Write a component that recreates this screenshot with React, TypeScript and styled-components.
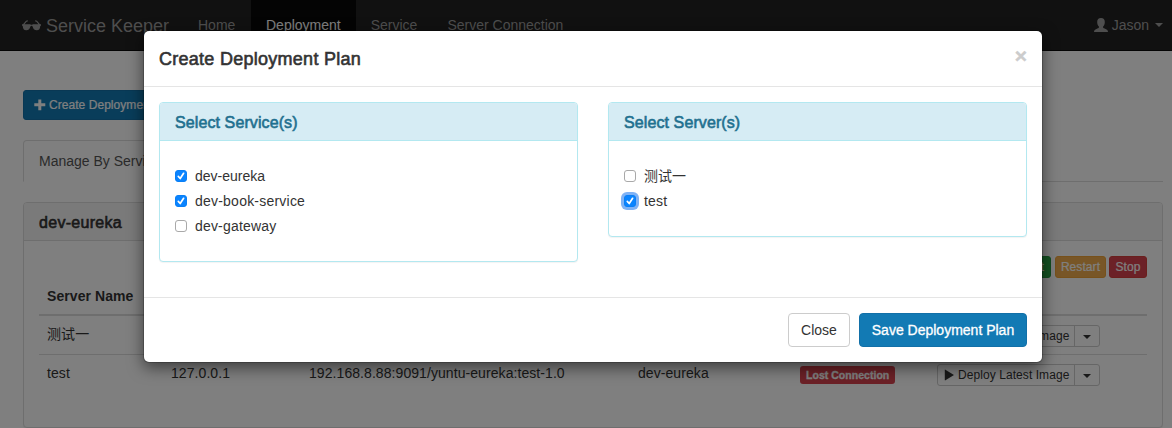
import React from 'react';
import styled, { createGlobalStyle, css } from 'styled-components';

const GlobalStyle = createGlobalStyle`
  *, *::before, *::after { box-sizing: border-box; }
  html, body { margin: 0; padding: 0; background: #fff; overflow: hidden; }
  body {
    font-family: "Liberation Sans", "Noto Sans CJK SC", sans-serif;
    font-size: 14px;
    line-height: 20px;
    color: #333;
  }
  h3, h4, ul { margin: 0; padding: 0; }
  button { font-family: inherit; margin: 0; }
`;

const medium = css`
  font-weight: 400;
  -webkit-text-stroke: 0.6px currentColor;
`;

const Page = styled.div`
  position: relative;
  height: 428px;
  overflow: hidden;
`;

const Navbar = styled.nav`
  display: flex;
  height: 51px;
  padding: 0 9px 0 22px;
  background: #222;
  border-bottom: 1px solid #080808;
  color: #9d9d9d;
`;

const Brand = styled.div`
  display: flex;
  align-items: center;
  gap: 5px;
  width: 161px;
  height: 50px;
  padding-top: 1px;
  font-size: 18px;
  white-space: nowrap;
`;

const NavList = styled.ul`
  display: flex;
  flex: 1;
  list-style: none;
`;

const NavItem = styled.li<{ $active?: boolean }>`
  padding: 15px;
  height: 50px;
  color: ${(p) => (p.$active ? '#fff' : '#9d9d9d')};
  background: ${(p) => (p.$active ? '#080808' : 'transparent')};
  &:first-child { width: 68px; }
`;

const UserMenu = styled.div`
  display: flex;
  align-items: center;
  height: 50px;
  gap: 4px;
`;

const Caret = styled.span<{ $gap?: number }>`
  width: 8px;
  height: 4px;
  margin-left: ${(p) => p.$gap ?? 0}px;
  border-top: 4px solid currentColor;
  border-left: 4px solid transparent;
  border-right: 4px solid transparent;
`;

const Content = styled.main`
  padding: 39px 9px 0 23px;
`;

const CreateButton = styled.button`
  display: flex;
  align-items: center;
  gap: 3px;
  height: 30px;
  padding: 0 10px;
  border: 1px solid #1270a8;
  border-radius: 3px;
  background: #127ab4;
  color: #fff;
  font-size: 12px;
  letter-spacing: 0.05px;
  -webkit-text-stroke: 0.2px currentColor;
`;

const Tabs = styled.div`
  display: flex;
  height: 42px;
  margin-top: 20px;
  border-bottom: 1px solid #ddd;
`;

const Tab = styled.div`
  height: 42px;
  padding: 10px 15px;
  border: 1px solid #ddd;
  border-bottom-color: #fff;
  border-radius: 4px 4px 0 0;
  background: #fff;
  color: #555;
`;

const Panel = styled.section<{ $info?: boolean }>`
  border: 1px solid ${(p) => (p.$info ? '#b3e8f0' : '#ddd')};
  border-radius: 4px;
  box-shadow: 0 1px 1px rgba(0, 0, 0, 0.05);
  background: #fff;
`;

const PanelHeading = styled.h3<{ $info?: boolean; $spacing?: number }>`
  ${medium}
  height: 38px;
  padding: 11px 15px 9px;
  border-bottom: 1px solid ${(p) => (p.$info ? '#b3e8f0' : '#ddd')};
  border-radius: 3px 3px 0 0;
  background: ${(p) => (p.$info ? '#d6ecf4' : '#f5f5f5')};
  color: ${(p) => (p.$info ? '#1f708f' : '#333')};
  font-size: 16px;
  line-height: 18px;
  letter-spacing: ${(p) => p.$spacing ?? 0.1}px;
`;

const ServicePanel = styled(Panel)`
  margin-top: 20px;
  height: 226px;
`;

const ServiceBody = styled.div`
  padding: 15px;
`;

const Actions = styled.div`
  display: flex;
  justify-content: flex-end;
  gap: 3px;
  height: 22px;
`;

const ActionButton = styled.button<{ $bg: string; $edge: string; $width: number }>`
  width: ${(p) => p.$width}px;
  height: 22px;
  padding: 0;
  border: 1px solid ${(p) => p.$edge};
  border-radius: 3px;
  background: ${(p) => p.$bg};
  color: #fff;
  font-size: 12px;
  line-height: 18px;
  letter-spacing: 0.08px;
  -webkit-text-stroke: 0.2px currentColor;
  &:first-child { margin-right: 1px; }
`;

const columns = '124px 138px 329px 162px 137px 1fr';

const HeadRow = styled.div`
  display: grid;
  grid-template-columns: ${columns};
  height: 38px;
  border-bottom: 2px solid #ddd;
  font-weight: 700;
`;

const Row = styled.div`
  display: grid;
  grid-template-columns: ${columns};
  height: 39px;
  border-bottom: 1px solid #ddd;
  &:last-child { border-bottom: 0; }
`;

const Cell = styled.div`
  display: flex;
  align-items: flex-start;
  padding: 8px;
  letter-spacing: 0.07px;
  white-space: nowrap;
`;

const Label = styled.span`
  height: 18px;
  margin-top: 3px;
  padding: 0 6px;
  border-radius: 3px;
  background: #d9434f;
  color: #fff;
  font-size: 10.5px;
  font-weight: 700;
  line-height: 18px;
  letter-spacing: 0.03px;
  -webkit-text-stroke: 0.3px currentColor;
`;

const SplitButton = styled.div`
  display: flex;
  height: 22px;
  margin-top: 1px;
  border: 1px solid #ccc;
  border-radius: 3px;
  font-size: 12px;
  line-height: 20px;
`;

const SplitMain = styled.div`
  display: flex;
  align-items: center;
  gap: 4px;
  width: 137px;
  padding-left: 6px;
  border-right: 1px solid #ccc;
`;

const SplitToggle = styled.div`
  display: flex;
  align-items: center;
  justify-content: center;
  width: 24px;
  padding-top: 1px;
`;

const Backdrop = styled.div`
  position: absolute;
  inset: 0;
  padding: 30px 0 0 143px;
  background: rgba(0, 0, 0, 0.5);
`;

const Dialog = styled.div`
  width: 900px;
  border: 1px solid rgba(0, 0, 0, 0.2);
  border-radius: 6px;
  background: #fff;
  background-clip: padding-box;
  box-shadow: 0 5px 15px rgba(0, 0, 0, 0.5);
`;

const DialogHeader = styled.header`
  display: flex;
  justify-content: space-between;
  height: 56px;
  padding: 15px;
  border-bottom: 1px solid #e5e5e5;
`;

const DialogTitle = styled.h4`
  ${medium}
  font-size: 18px;
  line-height: 26px;
  letter-spacing: 0.27px;
`;

const CloseMark = styled.button`
  height: 21px;
  margin-top: -1px;
  padding: 0;
  border: 0;
  background: none;
  color: #ccc;
  font-size: 21px;
  font-weight: 700;
  line-height: 21px;
  -webkit-text-stroke: 0.4px currentColor;
`;

const DialogBody = styled.div`
  display: grid;
  grid-template-columns: 1fr 1fr;
  gap: 30px;
  align-items: start;
  height: 210px;
  padding: 15px;
`;

const Options = styled.div`
  display: flex;
  flex-direction: column;
  gap: 5px;
  padding: 25px 15px;
`;

const Option = styled.label<{ $spacing?: number }>`
  display: flex;
  align-items: center;
  gap: 8px;
  height: 20px;
  letter-spacing: ${(p) => p.$spacing ?? 0}px;
`;

const Box = styled.span<{ $checked?: boolean; $focused?: boolean }>`
  display: flex;
  width: 12px;
  height: 12px;
  border: 1px solid ${(p) => (p.$checked ? '#0a7ff5' : '#a9a9a9')};
  border-radius: 3px;
  background: ${(p) => (p.$checked ? '#0a84ff' : '#fff')};
  box-shadow: ${(p) => (p.$focused ? '0 0 0 3px #7fb2f5' : 'none')};
`;

const DialogFooter = styled.footer`
  display: flex;
  justify-content: flex-end;
  gap: 9px;
  padding: 15px;
  border-top: 1px solid #e5e5e5;
`;

const FooterButton = styled.button<{ $primary?: boolean }>`
  height: 34px;
  width: ${(p) => (p.$primary ? 168 : 62)}px;
  padding: 0;
  border: 1px solid ${(p) => (p.$primary ? '#1270a8' : '#ccc')};
  border-radius: 4px;
  background: ${(p) => (p.$primary ? '#127ab4' : '#fff')};
  color: ${(p) => (p.$primary ? '#fff' : '#333')};
  font-size: 14px;
  -webkit-text-stroke: ${(p) => (p.$primary ? 0.3 : 0)}px currentColor;
`;

const GlassesIcon = () => (
  <svg width="19" height="18" viewBox="0 0 19 18" fill="currentColor">
    <path d="M0 7.200h1L4 3.700l1.700-.5.3 1-1.400.5-2.100 2.500h5.200c.6 0 .9.500 1.800.500s1.200-.5 1.800-.5h5.200l-2.100-2.500-1.400-.5.3-1 1.700.5 3 3.500h1v1.500h-.7c-.2 3.100-1.200 4.500-3.500 4.500-2.600 0-3.600-1.500-4.200-3.700-.2-.5-.6-.7-1.100-.7s-.9.2-1.100.7c-.6 2.200-1.600 3.700-4.200 3.700C1.900 13.200.9 11.800.7 8.700H0z" />
  </svg>
);

const PlusIcon = () => (
  <svg width="12" height="12" viewBox="0 0 12 12" fill="currentColor">
    <path d="M4.300.400h3v3.900h4v3h-4v3.900h-3V7.300h-4v-3h4z" />
  </svg>
);

const UserIcon = () => (
  <svg width="14" height="15" viewBox="0 0 14 15" fill="currentColor">
    <path d="M7 0c2.500 0 3.800 1.500 3.800 3.900 0 2-.7 3.600-1.700 4.500v1.200c.2.600 1.200.9 2.500 1.400 1.300.5 2.300 1 2.400 3H0c.1-2 1.100-2.500 2.400-3 1.300-.5 2.300-.8 2.500-1.400V8.400C3.900 7.500 3.200 5.900 3.200 3.900 3.200 1.500 4.500 0 7 0z" />
  </svg>
);

const PlayIcon = () => (
  <svg width="10" height="12" viewBox="0 0 10 12" fill="currentColor">
    <path d="M.8.900v10.200c0 .3.3.4.6.2L9.600 6.300c.3-.2.3-.4 0-.6L1.400.700C1.100.500.8.600.8.900z" />
  </svg>
);

const CheckIcon = () => (
  <svg width="10" height="10" viewBox="0 0 10 10" fill="none" stroke="#fff" strokeWidth="1.7" strokeLinecap="round" strokeLinejoin="round">
    <path d="M2.300 5.400l1.900 2.100 3.400-5.200" />
  </svg>
);

type Server = { name: string; ip: string; image: string; service: string };

const servers: Server[] = [
  { name: '测试一', ip: '', image: '', service: '' },
  { name: 'test', ip: '127.0.0.1', image: '192.168.8.88:9091/yuntu-eureka:test-1.0', service: 'dev-eureka' },
];

const ServerRow = ({ server }: { server: Server }) => (
  <Row>
    <Cell>{server.name}</Cell>
    <Cell>{server.ip}</Cell>
    <Cell>{server.image}</Cell>
    <Cell>{server.service}</Cell>
    <Cell>{server.ip && <Label>Lost Connection</Label>}</Cell>
    <Cell>
      <SplitButton>
        <SplitMain><PlayIcon />Deploy Latest Image</SplitMain>
        <SplitToggle><Caret /></SplitToggle>
      </SplitButton>
    </Cell>
  </Row>
);

type Choice = { text: string; checked?: boolean; focused?: boolean; spacing?: number };

const ChoicePanel = ({ title, choices }: { title: string; choices: Choice[] }) => (
  <Panel $info>
    <PanelHeading $info>{title}</PanelHeading>
    <Options>
      {choices.map((c) => (
        <Option key={c.text} $spacing={c.spacing}>
          <Box $checked={c.checked} $focused={c.focused}>{c.checked && <CheckIcon />}</Box>
          {c.text}
        </Option>
      ))}
    </Options>
  </Panel>
);

export default function App() {
  return (
    <Page>
      <GlobalStyle />
      <Navbar>
        <Brand><GlassesIcon />Service Keeper</Brand>
        <NavList>
          <NavItem>Home</NavItem>
          <NavItem $active>Deployment</NavItem>
          <NavItem>Service</NavItem>
          <NavItem>Server Connection</NavItem>
        </NavList>
        <UserMenu><UserIcon />Jason<Caret $gap={2} /></UserMenu>
      </Navbar>
      <Content>
        <CreateButton><PlusIcon />Create Deployment Plan</CreateButton>
        <Tabs><Tab>Manage By Service</Tab></Tabs>
        <ServicePanel>
          <PanelHeading $spacing={0.3}>dev-eureka</PanelHeading>
          <ServiceBody>
            <Actions>
              <ActionButton $bg="#28a745" $edge="#259a40" $width={40}>Start</ActionButton>
              <ActionButton $bg="#f0ad4e" $edge="#eea236" $width={51}>Restart</ActionButton>
              <ActionButton $bg="#d9434f" $edge="#d43f3a" $width={38}>Stop</ActionButton>
            </Actions>
            <HeadRow><Cell>Server Name</Cell></HeadRow>
            <div>{servers.map((s) => <ServerRow key={s.name} server={s} />)}</div>
          </ServiceBody>
        </ServicePanel>
      </Content>
      <Backdrop>
        <Dialog>
          <DialogHeader>
            <DialogTitle>Create Deployment Plan</DialogTitle>
            <CloseMark>×</CloseMark>
          </DialogHeader>
          <DialogBody>
            <ChoicePanel
              title="Select Service(s)"
              choices={[
                { text: 'dev-eureka', checked: true },
                { text: 'dev-book-service', checked: true, spacing: 0.22 },
                { text: 'dev-gateway', spacing: 0.18 },
              ]}
            />
            <ChoicePanel
              title="Select Server(s)"
              choices={[{ text: '测试一' }, { text: 'test', checked: true, focused: true, spacing: 0.2 }]}
            />
          </DialogBody>
          <DialogFooter>
            <FooterButton>Close</FooterButton>
            <FooterButton $primary>Save Deployment Plan</FooterButton>
          </DialogFooter>
        </Dialog>
      </Backdrop>
    </Page>
  );
}
